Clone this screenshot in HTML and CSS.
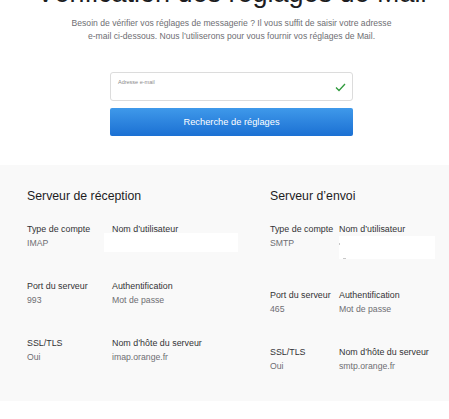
FILE: index.html
```html
<!DOCTYPE html>
<html lang="fr">
<head>
<meta charset="utf-8">
<title>Vérification des réglages de Mail</title>
<link rel="stylesheet" href="styles.css">
</head>
<body>
<header class="intro">
  <h1 class="title">Vérification des réglages de Mail</h1>
  <p class="lead">Besoin de vérifier vos réglages de messagerie ? Il vous suffit de saisir votre adresse<br>e-mail ci-dessous. Nous l’utiliserons pour vous fournir vos réglages de Mail.</p>
  <form class="lookup">
    <label class="field">
      <span class="field-label">Adresse e-mail</span>
      <svg class="check" width="11" height="9" viewBox="0 0 11 9"><polyline points="1,4.5 4,7.5 10,1" fill="none" stroke="#2f9a3c" stroke-width="1.3"/></svg>
    </label>
    <button type="button" class="btn">Recherche de réglages</button>
  </form>
</header>
<section class="servers">
  <div class="server server-in">
    <h2 class="server-title">Serveur de réception</h2>
    <dl class="grid grid-in">
      <div class="item"><dt>Type de compte</dt><dd>IMAP</dd></div>
      <div class="item"><dt>Nom d’utilisateur</dt><dd class="masked"><span class="mask mask-in"></span></dd></div>
      <div class="item"><dt>Port du serveur</dt><dd>993</dd></div>
      <div class="item"><dt>Authentification</dt><dd>Mot de passe</dd></div>
      <div class="item"><dt>SSL/TLS</dt><dd>Oui</dd></div>
      <div class="item"><dt>Nom d’hôte du serveur</dt><dd>imap.orange.fr</dd></div>
    </dl>
  </div>
  <div class="server server-out">
    <h2 class="server-title">Serveur d’envoi</h2>
    <dl class="grid grid-out">
      <div class="item"><dt>Type de compte</dt><dd>SMTP</dd></div>
      <div class="item"><dt>Nom d’utilisateur</dt><dd class="mask-out"><span class="dot dot1"></span><span class="dot dot2"></span></dd></div>
      <div class="item"><dt>Port du serveur</dt><dd>465</dd></div>
      <div class="item"><dt>Authentification</dt><dd>Mot de passe</dd></div>
      <div class="item"><dt>SSL/TLS</dt><dd>Oui</dd></div>
      <div class="item"><dt>Nom d’hôte du serveur</dt><dd>smtp.orange.fr</dd></div>
    </dl>
  </div>
</section>
</body>
</html>
```
FILE: styles.css
```css
* { box-sizing: border-box; }
html, body { margin: 0; padding: 0; background: #fff; }
body {
  font-family: "Liberation Sans", Arial, sans-serif;
  color: #1d1d1f;
  width: 449px;
  overflow: hidden;
}
.intro {
  width: 463px;
  text-align: center;
  padding-bottom: 29px;
}
.title {
  margin: -23px 0 0;
  font-size: 27px;
  line-height: 32px;
  font-weight: 400;
  color: #1d1d1f;
}
.lead {
  margin: 8px 0 0;
  font-size: 8.6px;
  line-height: 13px;
  color: #6e6e73;
}
.lookup {
  width: 243px;
  margin: 29px auto 0;
  display: flex;
  flex-direction: column;
  gap: 7px;
}
.field {
  position: relative;
  display: block;
  height: 29px;
  border: 1px solid #dcdcdc;
  border-radius: 3px;
  background: #fff;
  text-align: left;
  padding: 5px 0 0 7px;
}
.field-label {
  display: block;
  font-size: 5.5px;
  line-height: 8px;
  color: #8a8a8a;
}
.check {
  position: absolute;
  right: 6px;
  top: 10px;
}
.btn {
  height: 28px;
  border: 0;
  border-radius: 2px;
  background: linear-gradient(#3f99ea, #1b70d3);
  color: #fff;
  font-family: inherit;
  font-size: 9.3px;
  padding: 0;
}
.servers {
  background: #f9f9f9;
  display: flex;
  padding: 23px 14px 22px 27px;
  height: 236px;
}
.server-in { width: 243px; }
.server-out { flex: 1; }
.server-title {
  margin: 0;
  font-size: 12.3px;
  line-height: 16px;
  font-weight: 400;
  color: #1d1d1f;
}
.grid {
  display: grid;
  margin: 18px 0 0;
  row-gap: 29px;
  align-items: start;
}
.grid-in { grid-template-columns: 85px 1fr; }
.grid-out { grid-template-columns: 69px 1fr; }
.item { line-height: 14px; }
dt { color: #333336; font-size: 8.9px; white-space: nowrap; }
dd { margin: 0; color: #6e6e73; font-size: 8.7px; }
.masked { position: relative; height: 14px; }
.mask-in {
  position: absolute;
  left: -8px;
  top: -3px;
  width: 134px;
  height: 19px;
  background: #fff;
}
.mask-out {
  position: relative;
  height: 23px;
  width: 96px;
  background: #fff;
}
.dot {
  position: absolute;
  width: 1px;
  height: 2px;
  background: #c8c8c8;
}
.dot1 { left: 0; top: 7px; }
.dot2 { left: 4px; top: 22px; width: 3px; height: 1px; }
```
